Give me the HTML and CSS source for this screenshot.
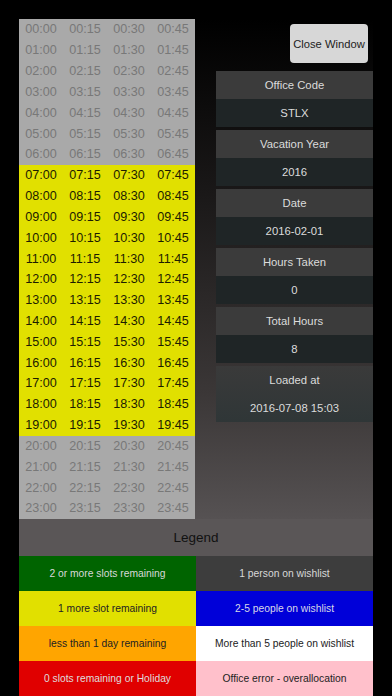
FILE: index.html
```html
<!DOCTYPE html>
<html lang="en">
<head>
  <meta charset="UTF-8" />
  <meta name="viewport" content="width=device-width, initial-scale=1.0"/>
  <title>Vacation Slots</title>
  <link rel="stylesheet" href="styles.css">
</head>
<body>
  <div class="screen">
    <div class="top">
      <div class="slots">
        <div class="row off"><span>00:00</span><span>00:15</span><span>00:30</span><span>00:45</span></div>
        <div class="row off"><span>01:00</span><span>01:15</span><span>01:30</span><span>01:45</span></div>
        <div class="row off"><span>02:00</span><span>02:15</span><span>02:30</span><span>02:45</span></div>
        <div class="row off"><span>03:00</span><span>03:15</span><span>03:30</span><span>03:45</span></div>
        <div class="row off"><span>04:00</span><span>04:15</span><span>04:30</span><span>04:45</span></div>
        <div class="row off"><span>05:00</span><span>05:15</span><span>05:30</span><span>05:45</span></div>
        <div class="row off"><span>06:00</span><span>06:15</span><span>06:30</span><span>06:45</span></div>
        <div class="row on"><span>07:00</span><span>07:15</span><span>07:30</span><span>07:45</span></div>
        <div class="row on"><span>08:00</span><span>08:15</span><span>08:30</span><span>08:45</span></div>
        <div class="row on"><span>09:00</span><span>09:15</span><span>09:30</span><span>09:45</span></div>
        <div class="row on"><span>10:00</span><span>10:15</span><span>10:30</span><span>10:45</span></div>
        <div class="row on"><span>11:00</span><span>11:15</span><span>11:30</span><span>11:45</span></div>
        <div class="row on"><span>12:00</span><span>12:15</span><span>12:30</span><span>12:45</span></div>
        <div class="row on"><span>13:00</span><span>13:15</span><span>13:30</span><span>13:45</span></div>
        <div class="row on"><span>14:00</span><span>14:15</span><span>14:30</span><span>14:45</span></div>
        <div class="row on"><span>15:00</span><span>15:15</span><span>15:30</span><span>15:45</span></div>
        <div class="row on"><span>16:00</span><span>16:15</span><span>16:30</span><span>16:45</span></div>
        <div class="row on"><span>17:00</span><span>17:15</span><span>17:30</span><span>17:45</span></div>
        <div class="row on"><span>18:00</span><span>18:15</span><span>18:30</span><span>18:45</span></div>
        <div class="row on"><span>19:00</span><span>19:15</span><span>19:30</span><span>19:45</span></div>
        <div class="row off"><span>20:00</span><span>20:15</span><span>20:30</span><span>20:45</span></div>
        <div class="row off"><span>21:00</span><span>21:15</span><span>21:30</span><span>21:45</span></div>
        <div class="row off"><span>22:00</span><span>22:15</span><span>22:30</span><span>22:45</span></div>
        <div class="row off"><span>23:00</span><span>23:15</span><span>23:30</span><span>23:45</span></div>
      </div>

      <div class="side">
        <button class="close-btn">Close Window</button>

        <div class="info">
          <div class="info-label">Office Code</div>
          <div class="info-value">STLX</div>
        </div>
        <div class="info">
          <div class="info-label">Vacation Year</div>
          <div class="info-value">2016</div>
        </div>
        <div class="info">
          <div class="info-label">Date</div>
          <div class="info-value">2016-02-01</div>
        </div>
        <div class="info">
          <div class="info-label">Hours Taken</div>
          <div class="info-value">0</div>
        </div>
        <div class="info">
          <div class="info-label">Total Hours</div>
          <div class="info-value">8</div>
        </div>
        <div class="info loaded">
          <div class="info-label">Loaded at</div>
          <div class="info-value">2016-07-08 15:03</div>
        </div>
      </div>
    </div>

    <div class="legend">
      <div class="legend-title">Legend</div>
      <div class="legend-grid">
        <div class="key green">2 or more slots remaining</div>
        <div class="key grey">1 person on wishlist</div>
        <div class="key yellow">1 more slot remaining</div>
        <div class="key blue">2-5 people on wishlist</div>
        <div class="key orange">less than 1 day remaining</div>
        <div class="key white">More than 5 people on wishlist</div>
        <div class="key red">0 slots remaining or Holiday</div>
        <div class="key pink">Office error - overallocation</div>
      </div>
    </div>
  </div>
</body>
</html>
```

FILE: styles.css
```css
* {
  margin: 0;
  padding: 0;
  box-sizing: border-box;
  font-family: "Liberation Sans", Arial, sans-serif;
}
html, body {
  background: #000;
  height: 100%;
}
.screen {
  width: 354px;
  margin-left: 19px;
  padding-top: 19px;
}
.top {
  display: flex;
  background: linear-gradient(to bottom, #000 0%, #1a1818 35%, #3b3737 75%, #565253 100%);
}
.slots {
  width: 176px;
}
.row {
  display: grid;
  grid-template-columns: repeat(4, 44px);
  height: 20.83px;
  align-items: center;
  text-align: center;
  font-size: 12.6px;
}
.row.off {
  background: #a9a9a9;
  color: #787878;
}
.row.on {
  background: #e1e000;
  color: #1c1c00;
}
.side {
  flex: 1;
  display: flex;
  flex-direction: column;
  align-items: flex-end;
  padding-left: 21px;
}
.close-btn {
  width: 78px;
  height: 39px;
  margin-top: 5px;
  margin-right: 5px;
  margin-bottom: 8px;
  background: #d7d7d7;
  border: none;
  border-radius: 4px;
  color: #222;
  font-size: 11.2px;
}
.info {
  width: 100%;
  margin-bottom: 3px;
  color: #dcdcdc;
  font-size: 11.3px;
  text-align: center;
}
.info-label {
  height: 28px;
  line-height: 28px;
  background: #3b3b3b;
}
.info-value {
  height: 28px;
  line-height: 28px;
  background: #1f2526;
}
.loaded {
  background: linear-gradient(to bottom, #3a3a3a, #2f3637);
}
.loaded .info-label,
.loaded .info-value {
  background: none;
}
.legend-title {
  height: 37px;
  line-height: 37px;
  background: #5a5657;
  color: #111;
  font-size: 13.5px;
  text-align: center;
}
.legend-grid {
  display: grid;
  grid-template-columns: 177px 177px;
}
.key {
  height: 35px;
  line-height: 35px;
  text-align: center;
  font-size: 10.3px;
}
.green { background: #006400; color: #d8d8d8; }
.grey { background: #3d3d3d; color: #d8d8d8; }
.yellow { background: #e1e000; color: #222; }
.blue { background: #0000d9; color: #d8d8e8; }
.orange { background: #ffa500; color: #222; }
.white { background: #fff; color: #222; }
.red { background: #e00000; color: #ddd; }
.pink { background: #ffc0cb; color: #222; }
```
